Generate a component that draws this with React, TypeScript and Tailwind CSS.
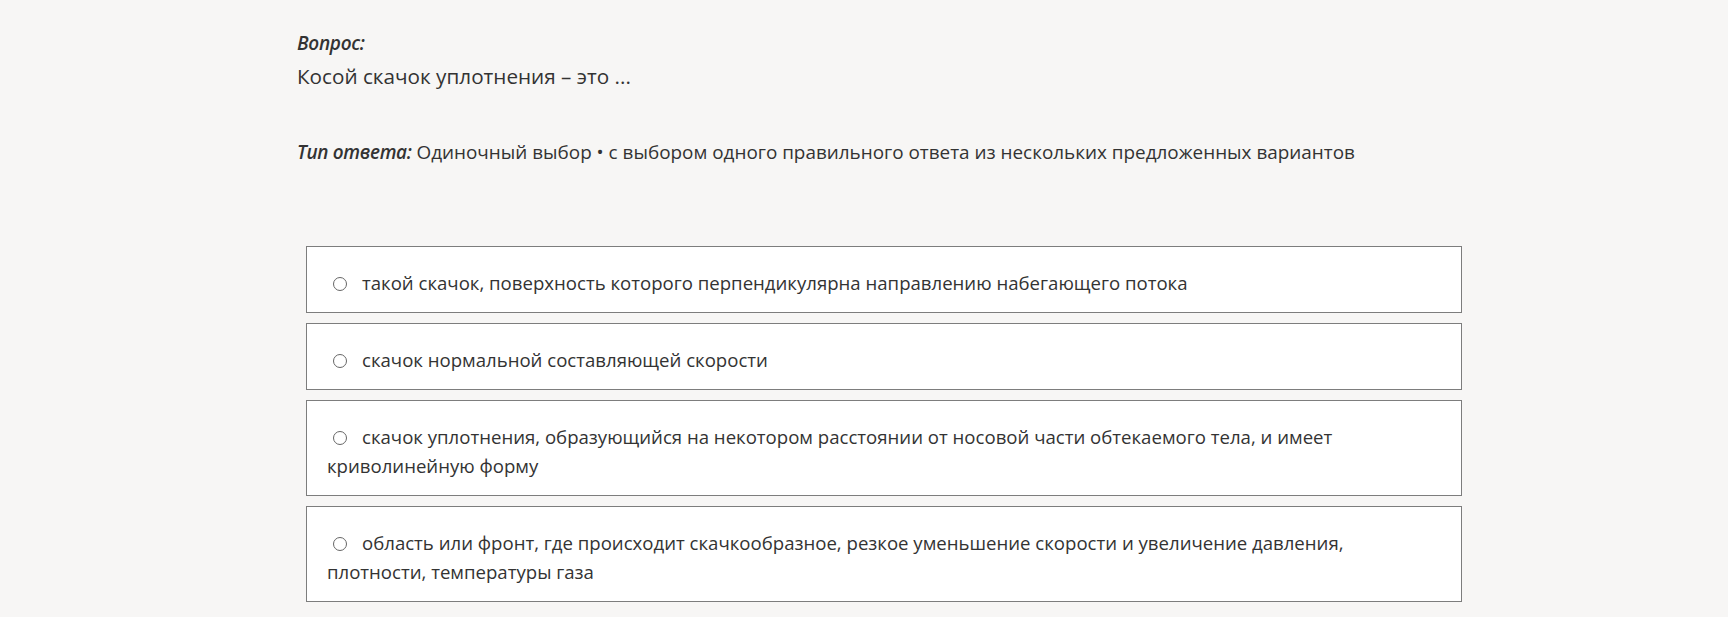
const options = [
  "такой скачок, поверхность которого перпендикулярна направлению набегающего потока",
  "скачок нормальной составляющей скорости",
  "скачок уплотнения, образующийся на некотором расстоянии от носовой части обтекаемого тела, и имеет криволинейную форму",
  "область или фронт, где происходит скачкообразное, резкое уменьшение скорости и увеличение давления, плотности, температуры газа",
];

const Radio = () => (
  <span className="mr-[15px] ml-[6px] inline-block h-[14px] w-[14px] rounded-full border-[1.5px] border-[#666666] align-[-1px]" />
);

export default function App() {
  return (
    <div
      className="min-h-screen bg-[#f7f6f5] text-[#333333]"
      style={{ fontFamily: '"Open Sans", "Noto Sans", sans-serif' }}
    >
      <div className="pl-[297px] pr-[266px] pt-[30px]">
        <div className="text-[19px] font-semibold italic leading-[26px] tracking-[-0.3px]">Вопрос:</div>
        <div className="mt-[4px] text-[20.7px] leading-[32px]">Косой скачок уплотнения – это ...</div>

        <div className="mt-[47px] text-[18.9px] leading-[26px]">
          <span className="font-semibold italic tracking-[-0.3px]">Тип ответа:</span>{" "}
          Одиночный выбор • с выбором одного правильного ответа из нескольких предложенных вариантов
        </div>

        <div className="mt-[81px] ml-[9px] flex flex-col gap-[10px]">
          {options.map((text, i) => (
            <div
              key={i}
              className="border border-[#7d7d7d] bg-white px-[20px] pt-[21px] pb-[15px] text-[18.6px] leading-[29px]"
            >
              <Radio />
              {text}
            </div>
          ))}
        </div>
      </div>
    </div>
  );
}
